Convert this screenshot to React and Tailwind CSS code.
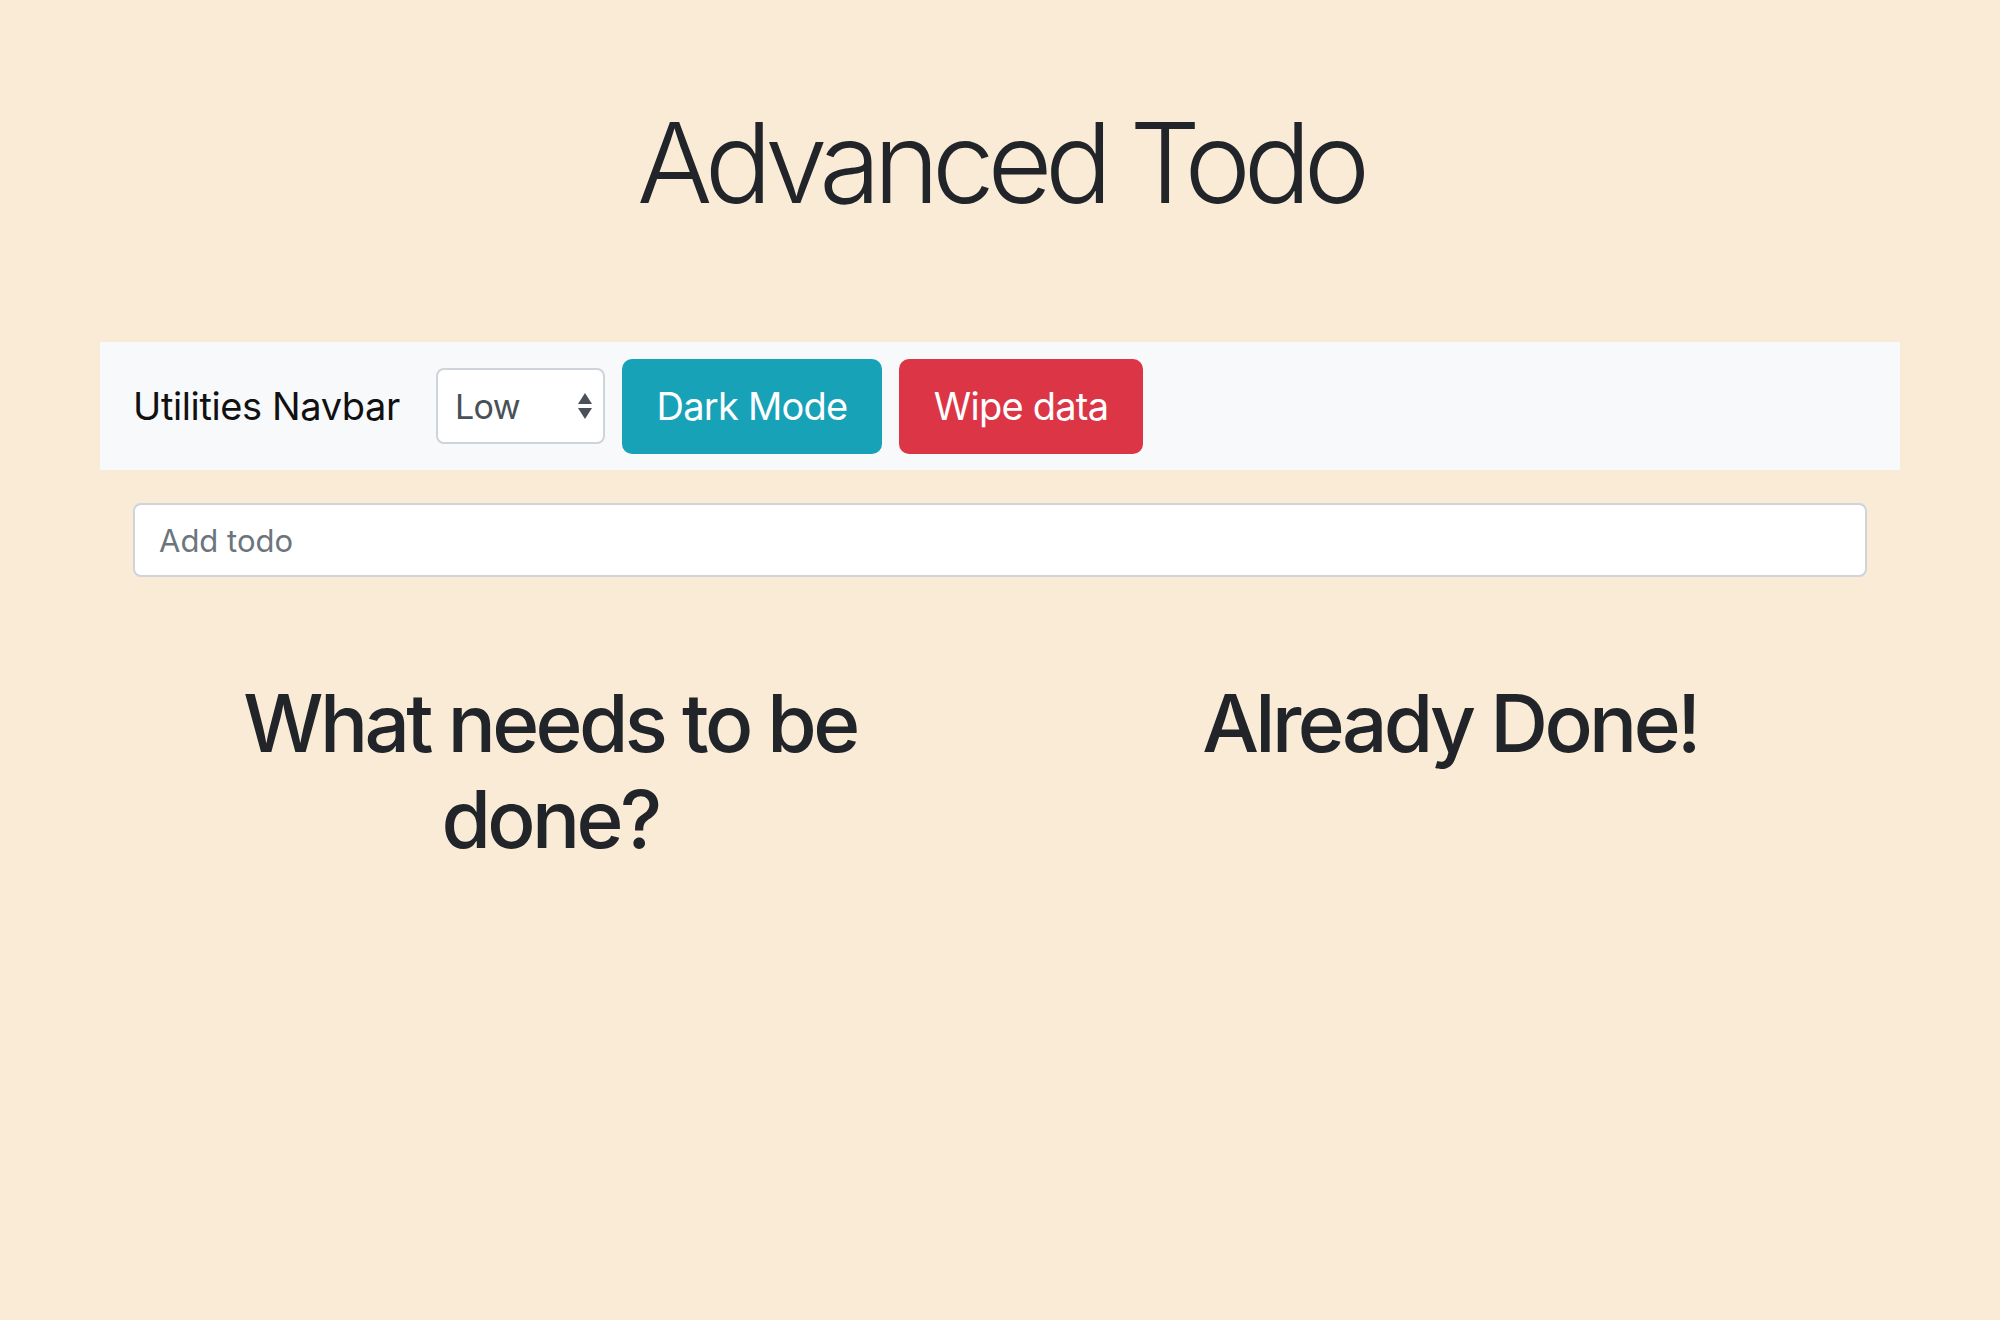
import { useState } from "react";

/* Advanced Todo – utilities navbar, add input, two columns */
export default function App() {
  const [todo, setTodo] = useState("");

  return (
    <div
      className="min-h-screen bg-[#faebd7] text-[#212529] pt-[106px]"
      style={{ fontFamily: "Inter, 'Noto Sans', 'Liberation Sans', sans-serif" }}
    >
      <h1 className="text-center text-[112px] leading-none font-light tracking-[-0.065em]">Advanced Todo</h1>

      <div className="w-[1800px] mx-auto mt-[124px]">
        <nav className="h-[128px] bg-[#f8f9fa] px-[33px] flex items-center">
          <span className="text-[38px] text-[#111] mr-[36px] tracking-[-0.01em]">Utilities Navbar</span>

          <div className="relative w-[169px] h-[76px] bg-white border-2 border-[#ced4da] rounded-[8px] flex items-center pl-[17px]">
            <span className="text-[34px] text-[#495057] tracking-[-0.02em]">Low</span>
            <svg className="absolute right-[10px] top-1/2 -translate-y-1/2" width="16" height="30" viewBox="0 0 16 30">
              <path d="M8 2 L15 13 L1 13 Z" fill="#495057" />
              <path d="M1 17 L15 17 L8 28 Z" fill="#495057" />
            </svg>
          </div>

          <button className="ml-[17px] w-[260px] h-[95px] rounded-[10px] bg-[#17a2b8] text-white text-[38px] tracking-[-0.02em]">
            Dark Mode
          </button>
          <button className="ml-[17px] w-[244px] h-[95px] rounded-[10px] bg-[#dc3545] text-white text-[38px] tracking-[-0.02em]">
            Wipe data
          </button>
        </nav>

        <div className="px-[33px] mt-[33px]">
          <input
            value={todo}
            onChange={(e) => setTodo(e.target.value)}
            placeholder="Add todo"
            className="w-full h-[74px] bg-white border-2 border-[#ced4da] rounded-[8px] pl-[24px] text-[31px] text-[#495057] placeholder:text-[#6c757d] outline-none"
          />
        </div>

        <div className="grid grid-cols-2 mt-[98px]">
          <h2 className="text-center px-[60px] text-[80px] leading-[96px] font-medium tracking-[-0.045em]">
            What needs to be done?
          </h2>
          <h2 className="text-center px-[60px] text-[80px] leading-[96px] font-medium tracking-[-0.045em]">
            Already Done!
          </h2>
        </div>
      </div>
    </div>
  );
}
